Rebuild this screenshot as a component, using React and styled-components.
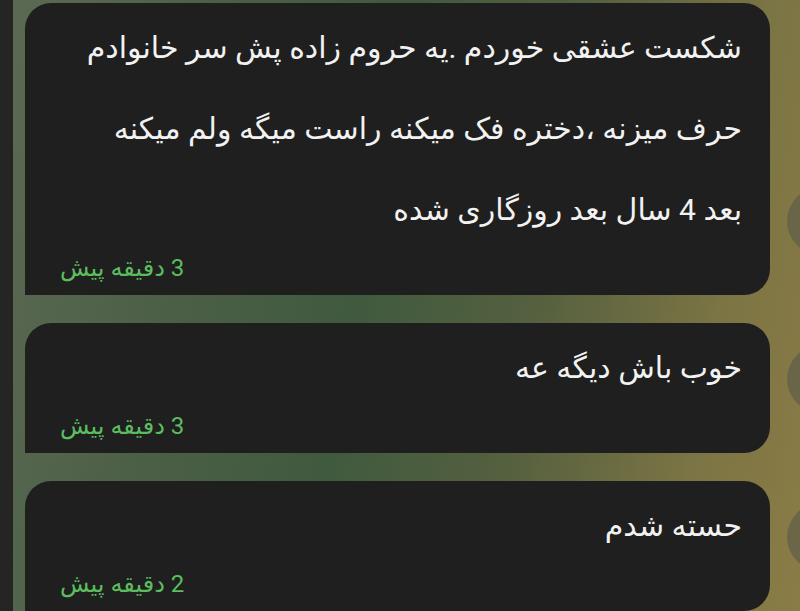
import styled, { createGlobalStyle } from 'styled-components'

const messages = [
  {
    lines: [
      'شکست عشقی خوردم .یه حروم زاده پش سر خانوادم',
      'حرف میزنه ،دختره فک میکنه راست میگه ولم میکنه',
      'بعد 4 سال بعد روزگاری شده',
    ],
    time: '3 دقیقه پیش',
  },
  { lines: ['خوب باش دیگه عه'], time: '3 دقیقه پیش' },
  { lines: ['حسته شدم'], time: '2 دقیقه پیش' },
]

const App = () => (
  <>
    <GlobalStyle />
    <Screen>
      <SideStrip />
      <Chat>
        {messages.map((msg, i) => (
          <Row key={i}>
            <Bubble>
              <Body>
                {msg.lines.map((line, j) => (
                  <Line key={j}>{line}</Line>
                ))}
              </Body>
              <Time>{msg.time}</Time>
            </Bubble>
            <Avatar />
          </Row>
        ))}
      </Chat>
    </Screen>
  </>
)

const GlobalStyle = createGlobalStyle`
  html, body {
    margin: 0;
    padding: 0;
    height: 611px;
    overflow: hidden;
  }
  body {
    font-family: Roboto, "DejaVu Sans", sans-serif;
  }
`

const Screen = styled.div`
  display: flex;
  width: 800px;
  height: 611px;
  overflow: hidden;
  background: linear-gradient(
    100deg,
    #5c6a53 0%,
    #4b5f46 25%,
    #405a3f 45%,
    #55603f 65%,
    #7b7444 85%,
    #8a7c46 100%
  );
`

const SideStrip = styled.div`
  flex: 0 0 13px;
  background: #252525;
`

const Chat = styled.div`
  flex: 1;
  display: flex;
  flex-direction: column;
  gap: 28px;
  padding: 3px 0 0 12px;
  min-width: 0;
`

const Row = styled.div`
  display: flex;
  align-items: flex-end;
  gap: 17px;
`

const Bubble = styled.div`
  flex: 0 0 745px;
  box-sizing: border-box;
  background: #1f1f1f;
  border-radius: 26px 26px 26px 0;
  padding: 4px 28px 11px 35px;
  display: flex;
  flex-direction: column;
`

const Body = styled.div`
  direction: rtl;
  text-align: right;
  color: #f2f2f2;
  font-size: 30px;
  line-height: 81px;
`

const Line = styled.div`
  white-space: nowrap;
`

const Time = styled.div`
  direction: rtl;
  align-self: flex-start;
  margin-top: 2px;
  color: #5cbd5f;
  font-size: 24px;
  line-height: 32px;
`

const Avatar = styled.div`
  flex: 0 0 68px;
  height: 68px;
  margin-bottom: 40px;
  border-radius: 50%;
  background: rgba(85, 85, 75, 0.55);
`

export default App
